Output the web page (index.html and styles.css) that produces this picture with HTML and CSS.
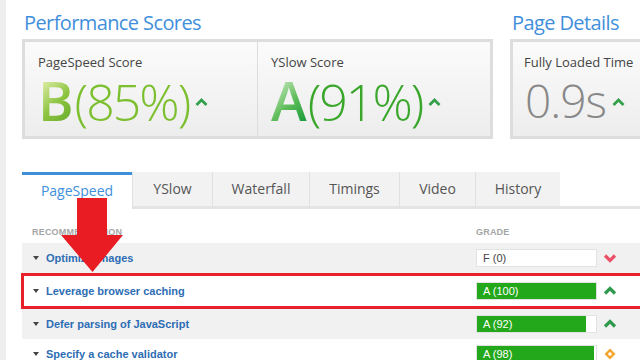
FILE: index.html
```html
<!DOCTYPE html>
<html lang="en">
<head>
  <meta charset="UTF-8">
  <meta name="viewport" content="width=device-width, initial-scale=1">
  <title>Performance Report</title>
  <link rel="stylesheet" href="styles.css">
</head>
<body>
<div class="page">
  <div class="scores">
    <section class="group perf">
      <h2>Performance Scores</h2>
      <div class="panel">
        <div class="cell">
          <div class="label">PageSpeed Score</div>
          <div class="value">
            <span class="letter letter-b">B</span><span class="pct pct-b">(85%)</span>
            <svg class="up" width="13" height="8" viewBox="0 0 13 8"><path d="M1.5 7 L6.5 2 L11.5 7" fill="none" stroke="#33a04b" stroke-width="2.8"/></svg>
          </div>
        </div>
        <div class="cell">
          <div class="label">YSlow Score</div>
          <div class="value">
            <span class="letter letter-a">A</span><span class="pct pct-a">(91%)</span>
            <svg class="up" width="13" height="8" viewBox="0 0 13 8"><path d="M1.5 7 L6.5 2 L11.5 7" fill="none" stroke="#33a04b" stroke-width="2.8"/></svg>
          </div>
        </div>
      </div>
    </section>

    <section class="group details">
      <h2>Page Details</h2>
      <div class="panel">
        <div class="cell">
          <div class="label">Fully Loaded Time</div>
          <div class="value">
            <span class="time">0.9s</span>
            <svg class="up" width="13" height="8" viewBox="0 0 13 8"><path d="M1.5 7 L6.5 2 L11.5 7" fill="none" stroke="#33a04b" stroke-width="2.8"/></svg>
          </div>
        </div>
      </div>
    </section>
  </div>

  <nav class="tabs">
    <a class="tab active" style="width:110px">PageSpeed</a>
    <a class="tab" style="width:80px">YSlow</a>
    <a class="tab" style="width:97px">Waterfall</a>
    <a class="tab" style="width:90px">Timings</a>
    <a class="tab" style="width:76px">Video</a>
    <a class="tab" style="width:85px">History</a>
    <span class="tab-rest"></span>
  </nav>

  <div class="report">
    <div class="report-head">
      <span class="col-name">Recommendation</span>
      <span class="col-grade">Grade</span>
    </div>

    <div class="row shade">
      <span class="name"><i class="caret"></i>Optimize images</span>
      <span class="bar dark" style="--w:0%">F (0)</span>
      <svg class="icon" width="14" height="10" viewBox="0 0 14 10"><path d="M2 2.5 L7 7.5 L12 2.5" fill="none" stroke="#ea5068" stroke-width="3.2"/></svg>
    </div>
    <div class="row marked">
      <span class="name"><i class="caret"></i>Leverage browser caching</span>
      <span class="bar" style="--w:100%">A (100)</span>
      <svg class="icon" width="14" height="10" viewBox="0 0 14 10"><path d="M2 7.5 L7 2.5 L12 7.5" fill="none" stroke="#2f9a4e" stroke-width="3.2"/></svg>
    </div>
    <div class="row shade">
      <span class="name"><i class="caret"></i>Defer parsing of JavaScript</span>
      <span class="bar" style="--w:92%">A (92)</span>
      <svg class="icon" width="14" height="10" viewBox="0 0 14 10"><path d="M2 7.5 L7 2.5 L12 7.5" fill="none" stroke="#2f9a4e" stroke-width="3.2"/></svg>
    </div>
    <div class="row">
      <span class="name"><i class="caret"></i>Specify a cache validator</span>
      <span class="bar" style="--w:98%">A (98)</span>
      <svg class="icon" width="14" height="14" viewBox="0 0 14 14"><path d="M7 1.5 L12.5 7 L7 12.5 L1.5 7 Z" fill="#f4a42a"/><circle cx="7" cy="7" r="1.8" fill="#fff"/></svg>
    </div>
  </div>
</div>

<svg class="arrow" width="640" height="360" viewBox="0 0 640 360">
  <path d="M77 198 H107 V235 H123 L92.5 272 L61 235 H77 Z" fill="#e91c24"/>
</svg>
</body>
</html>
```

FILE: styles.css
```css
body {
  margin: 0;
  position: relative;
  background: #fff;
  font-family: "Open Sans", "Liberation Sans", sans-serif;
  color: #444;
}
.page {
  height: 360px;
  overflow: hidden;
  border-left: 6px solid #eeeeee;
  padding: 10px 0 0 16px;
  box-sizing: border-box;
}
.scores {
  display: flex;
  gap: 17px;
}
.group h2 {
  margin: 0 0 3px 2px;
  font-size: 20px;
  font-weight: 400;
  line-height: 26px;
  letter-spacing: -0.6px;
  color: #3f8fdc;
  white-space: nowrap;
}
.perf {
  width: 471px;
  flex: none;
}
.details {
  flex: none;
  width: 200px;
}
.panel {
  display: flex;
  height: 100px;
  box-sizing: border-box;
  border: 3px solid #dddddd;
  background: linear-gradient(#fbfbfb, #ededed);
}
.cell {
  width: 232px;
  padding: 11px 0 0 13px;
  box-sizing: border-box;
}
.cell + .cell {
  width: 233px;
  border-left: 1px solid #dddddd;
}
.details .cell {
  width: auto;
  padding-left: 11px;
}
.label {
  font-size: 13px;
  line-height: 18px;
  color: #444;
  white-space: nowrap;
}
.value {
  display: flex;
  align-items: baseline;
  height: 50px;
  margin-top: 4px;
  line-height: 50px;
  font-size: 50px;
  font-weight: 300;
  white-space: nowrap;
}
.letter {
  font-size: 54px;
  font-weight: 600;
  margin-right: 1px;
  -webkit-background-clip: text;
  background-clip: text;
  color: transparent;
}
.letter-b {
  background-image: linear-gradient(135deg, #e2efaa 10%, #8cc440 55%, #6aad2e 90%);
}
.letter-a {
  background-image: linear-gradient(135deg, #d3eecb 10%, #5fbd5a 55%, #22a040 90%);
}
.pct {
  letter-spacing: -2px;
}
.pct-b {
  color: #7cbf2f;
}
.pct-a {
  color: #3aa72c;
}
.time {
  font-size: 46px;
  color: #888;
  margin-left: 1px;
  letter-spacing: -1px;
}
.up {
  margin-left: 6px;
  align-self: center;
  position: relative;
  top: 2px;
}
.tabs {
  display: flex;
  margin-top: 33px;
  height: 37px;
}
.tab {
  flex: none;
  box-sizing: border-box;
  height: 37px;
  line-height: 34px;
  border-left: 1px solid #e1e1e1;
  border-bottom: 3px solid #e4e4e4;
  background: #f2f2f2;
  text-align: center;
  font-size: 14px;
  color: #555;
}
.tab.active {
  border-left: none;
  border-top: 3px solid #3d8fd9;
  border-bottom-color: #fff;
  background: #fff;
  line-height: 31px;
  color: #3f8fdc;
}
.tab-rest {
  flex: 1;
  border-bottom: 3px solid #e4e4e4;
}
.report {
  font-family: "Liberation Sans", Arial, sans-serif;
}
.report-head {
  display: grid;
  grid-template-columns: 443px 121px;
  height: 34px;
  padding: 18px 0 0 10px;
  box-sizing: border-box;
  font-size: 9px;
  font-weight: bold;
  text-transform: uppercase;
  color: #a5a5a5;
  letter-spacing: 0.2px;
}
.col-grade {
  padding-left: 1px;
}
.row {
  display: grid;
  grid-template-columns: 443px 121px 1fr;
  align-items: center;
  height: 30px;
  padding-left: 11px;
  box-sizing: border-box;
  background: #fff;
}
.row.shade {
  background: #f1f1f1;
}
.row.marked {
  height: 36px;
  margin: 0 -12px 0 -1px;
  padding-left: 9px;
  border: 3px solid #e8202a;
}
.name {
  display: flex;
  align-items: center;
  font-size: 11px;
  font-weight: bold;
  color: #2d6db4;
  white-space: nowrap;
}
.caret {
  width: 0;
  height: 0;
  margin: 0 7px 0 0;
  border-left: 3.5px solid transparent;
  border-right: 3.5px solid transparent;
  border-top: 4px solid #444;
}
.bar {
  height: 18px;
  line-height: 16px;
  box-sizing: border-box;
  border: 1px solid #e2e2e2;
  padding-left: 6px;
  background: linear-gradient(to right, #23a81b var(--w), #fff var(--w));
  font-size: 11px;
  color: #fff;
}
.bar.dark {
  color: #444;
}
.icon {
  margin-left: 6px;
}
.arrow {
  position: absolute;
  left: 0;
  top: 0;
  pointer-events: none;
}
```
